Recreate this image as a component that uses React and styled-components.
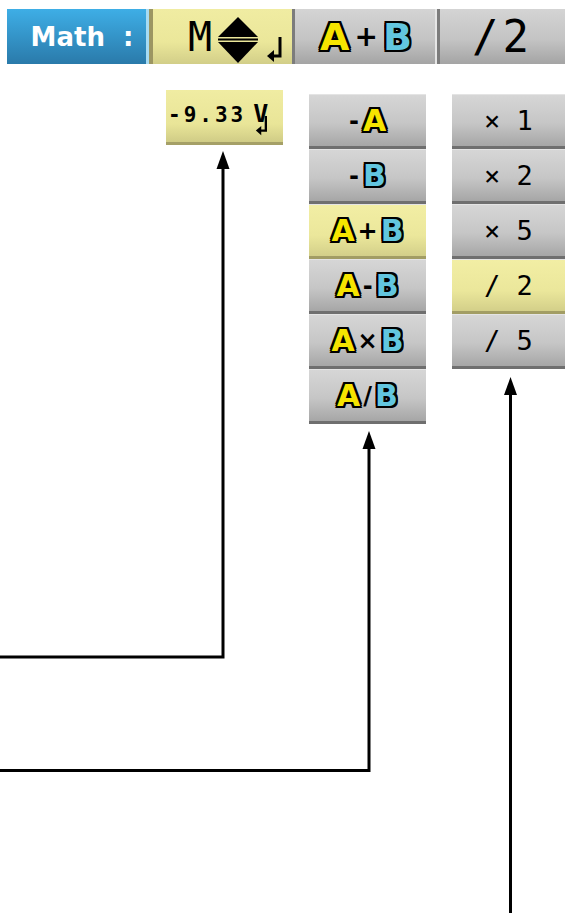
import React from "react";
import styled, { createGlobalStyle, css } from "styled-components";

const Global = createGlobalStyle`
  html, body { margin: 0; padding: 0; background: #ffffff; }
  body { font-family: "DejaVu Sans", sans-serif; }
`;

const Page = styled.div`
  position: relative;
  width: 565px;
  height: 913px;
  overflow: hidden;
  background: #ffffff;
`;

const TopBar = styled.div`
  display: flex;
  height: 55px;
  margin-top: 9px;
  padding-left: 7px;
`;

const tabSkins = {
  blue: css`
    background: linear-gradient(#3eaee6, #2a7aaa);
    box-shadow: inset -3px 0 0 #a6dbf3;
  `,
  yellow: css`
    background: linear-gradient(#f0eca2 0%, #ebe79a 60%, #d2ce88 100%);
    border-left: 4px solid #9c9662;
  `,
  grey: css`
    background: linear-gradient(#d4d4d4 0%, #c4c4c4 55%, #a4a4a4 100%);
    border-left: 3px solid #7c7c7c;
  `,
};

const Tab = styled.div`
  box-sizing: border-box;
  width: ${(p) => p.$w}px;
  height: 55px;
  display: flex;
  align-items: center;
  justify-content: center;
  ${(p) => tabSkins[p.$skin]}
  ${(p) => p.$edge && css`box-shadow: inset -2px 0 0 #e6e6e6;`}
`;

const MathLabel = styled.span`
  font-family: "DejaVu Sans", sans-serif;
  font-weight: bold;
  font-size: 26px;
  color: #ffffff;
  white-space: pre;
  margin-left: 8px;
`;

const ModeM = styled.span`
  font-family: "DejaVu Sans Mono", monospace;
  font-size: 40px;
  color: #000000;
  line-height: 1;
  margin-left: 26px;
`;

const ModeIcons = styled.div`
  display: flex;
  align-items: flex-end;
  gap: 9px;
  margin-left: 6px;
  margin-top: 6px;
`;

const BigLetters = styled.div`
  display: flex;
  align-items: center;
  gap: ${(p) => p.$gap ?? 6}px;
`;

const outline = css`
  text-shadow:
    -2px -2px 0 #000, 0 -2px 0 #000, 2px -2px 0 #000,
    -2px 0 0 #000, 2px 0 0 #000,
    -2px 2px 0 #000, 0 2px 0 #000, 2px 2px 0 #000;
`;

const Letter = styled.span`
  font-family: "DejaVu Sans", sans-serif;
  font-weight: bold;
  font-size: ${(p) => p.$size}px;
  line-height: 1;
  color: ${(p) => (p.$kind === "A" ? "#f6e400" : "#62c6df")};
  ${outline}
`;

const Op = styled.span`
  font-family: "DejaVu Sans", sans-serif;
  font-weight: bold;
  font-size: ${(p) => p.$size}px;
  line-height: 1;
  color: #000000;
`;

const Digits = styled.span`
  font-family: "DejaVu Sans Mono", monospace;
  font-size: ${(p) => p.$size}px;
  line-height: 1;
  color: #000000;
  letter-spacing: ${(p) => p.$ls ?? 0}px;
  white-space: pre;
`;

const PanelRow = styled.div`
  display: flex;
  align-items: flex-start;
  gap: 26px;
  padding-left: 166px;
`;

const ValueBox = styled.div`
  position: relative;
  box-sizing: border-box;
  width: 117px;
  height: 55px;
  margin-top: 26px;
  display: flex;
  align-items: center;
  padding-left: 2px;
  background: linear-gradient(#f0eca2 0%, #e9e598 65%, #d0cc86 100%);
  border-bottom: 3px solid #a5a067;
`;

const ValueText = styled.span`
  font-family: "DejaVu Sans Mono", monospace;
  font-weight: bold;
  font-size: 21px;
  letter-spacing: 3px;
  color: #000;
  margin-top: -3px;
`;

const UnitWrap = styled.span`
  position: relative;
  margin-left: 7px;
  margin-top: -6px;
  font-family: "DejaVu Sans Mono", monospace;
  font-weight: bold;
  font-size: 25px;
  color: #000;
`;

const UnitArrow = styled.svg`
  position: absolute;
  left: 2px;
  top: 17px;
`;

const Menu = styled.div`
  display: flex;
  flex-direction: column;
  width: ${(p) => p.$w}px;
  margin-top: 30px;
`;

const MenuItem = styled.div`
  box-sizing: border-box;
  height: 55px;
  display: flex;
  align-items: center;
  justify-content: center;
  border-top: 1px solid #e4e4e4;
  ${(p) =>
    p.$active
      ? css`
          background: linear-gradient(#f2eea4 0%, #ebe79b 60%, #d3cf89 100%);
          border-bottom: 3px solid #a29d64;
        `
      : css`
          background: linear-gradient(#d6d6d6 0%, #c6c6c6 55%, #a6a6a6 100%);
          border-bottom: 3px solid #6f6f6f;
        `}
`;

const Overlay = styled.svg`
  position: absolute;
  left: 0;
  top: 0;
  pointer-events: none;
`;

const UpDown = () => (
  <svg width="40" height="46" viewBox="0 0 40 46">
    <polygon points="20,0 40,20 0,20" fill="#000" />
    <rect x="0" y="21.5" width="40" height="2" fill="#000" />
    <polygon points="0,25 40,25 20,46" fill="#000" />
  </svg>
);

const ReturnArrow = () => (
  <svg width="16" height="26" viewBox="0 0 16 26">
    <path d="M13 0 V19 H6" stroke="#000" strokeWidth="3" fill="none" />
    <polygon points="0,19 7,13 7,25" fill="#000" />
  </svg>
);

const AB = ({ op, size, opSize, gap }) => (
  <BigLetters $gap={gap}>
    <Letter $kind="A" $size={size}>A</Letter>
    <Op $size={opSize}>{op}</Op>
    <Letter $kind="B" $size={size}>B</Letter>
  </BigLetters>
);

const opItems = [
  { only: "A" },
  { only: "B" },
  { op: "+", active: true },
  { op: "-" },
  { op: "×" },
  { op: "/" },
];

const scaleItems = [
  { t: "× 1" },
  { t: "× 2" },
  { t: "× 5" },
  { t: "/ 2", active: true },
  { t: "/ 5" },
];

const Arrow = ({ x, tipY, path }) => (
  <g>
    <path d={path} stroke="#000" strokeWidth="3" fill="none" />
    <polygon points={`${x},${tipY} ${x - 6.5},${tipY + 18} ${x + 6.5},${tipY + 18}`} fill="#000" />
  </g>
);

export default function App() {
  return (
    <Page>
      <Global />
      <TopBar>
        <Tab $skin="blue" $w={142}>
          <MathLabel>Math  :</MathLabel>
        </Tab>
        <Tab $skin="yellow" $w={143}>
          <ModeM>M</ModeM>
          <ModeIcons>
            <UpDown />
            <ReturnArrow />
          </ModeIcons>
        </Tab>
        <Tab $skin="grey" $w={145} $edge>
          <AB op="+" size={38} opSize={28} gap={5} />
        </Tab>
        <Tab $skin="grey" $w={128}>
          <Digits $size={44} $ls={4}>/2</Digits>
        </Tab>
      </TopBar>

      <PanelRow>
        <ValueBox>
          <ValueText>-9.33</ValueText>
          <UnitWrap>
            V
            <UnitArrow width="14" height="20" viewBox="0 0 16 26">
              <path d="M13 0 V19 H6" stroke="#000" strokeWidth="3" fill="none" />
              <polygon points="0,19 7,13 7,25" fill="#000" />
            </UnitArrow>
          </UnitWrap>
        </ValueBox>

        <Menu $w={117}>
          {opItems.map((it, i) => (
            <MenuItem key={i} $active={it.active}>
              {it.only ? (
                <BigLetters $gap={4}>
                  <Op $size={24}>-</Op>
                  <Letter $kind={it.only} $size={30}>{it.only}</Letter>
                </BigLetters>
              ) : (
                <AB op={it.op} size={30} opSize={24} gap={3} />
              )}
            </MenuItem>
          ))}
        </Menu>

        <Menu $w={113}>
          {scaleItems.map((it, i) => (
            <MenuItem key={i} $active={it.active}>
              <Digits $size={27}>{it.t}</Digits>
            </MenuItem>
          ))}
        </Menu>
      </PanelRow>

      <Overlay width="565" height="913" viewBox="0 0 565 913">
        <Arrow x={223} tipY={151} path="M223 166 V657 H0" />
        <Arrow x={369} tipY={431} path="M369 446 V770.5 H0" />
        <Arrow x={510.5} tipY={377} path="M510.5 392 V913" />
      </Overlay>
    </Page>
  );
}
